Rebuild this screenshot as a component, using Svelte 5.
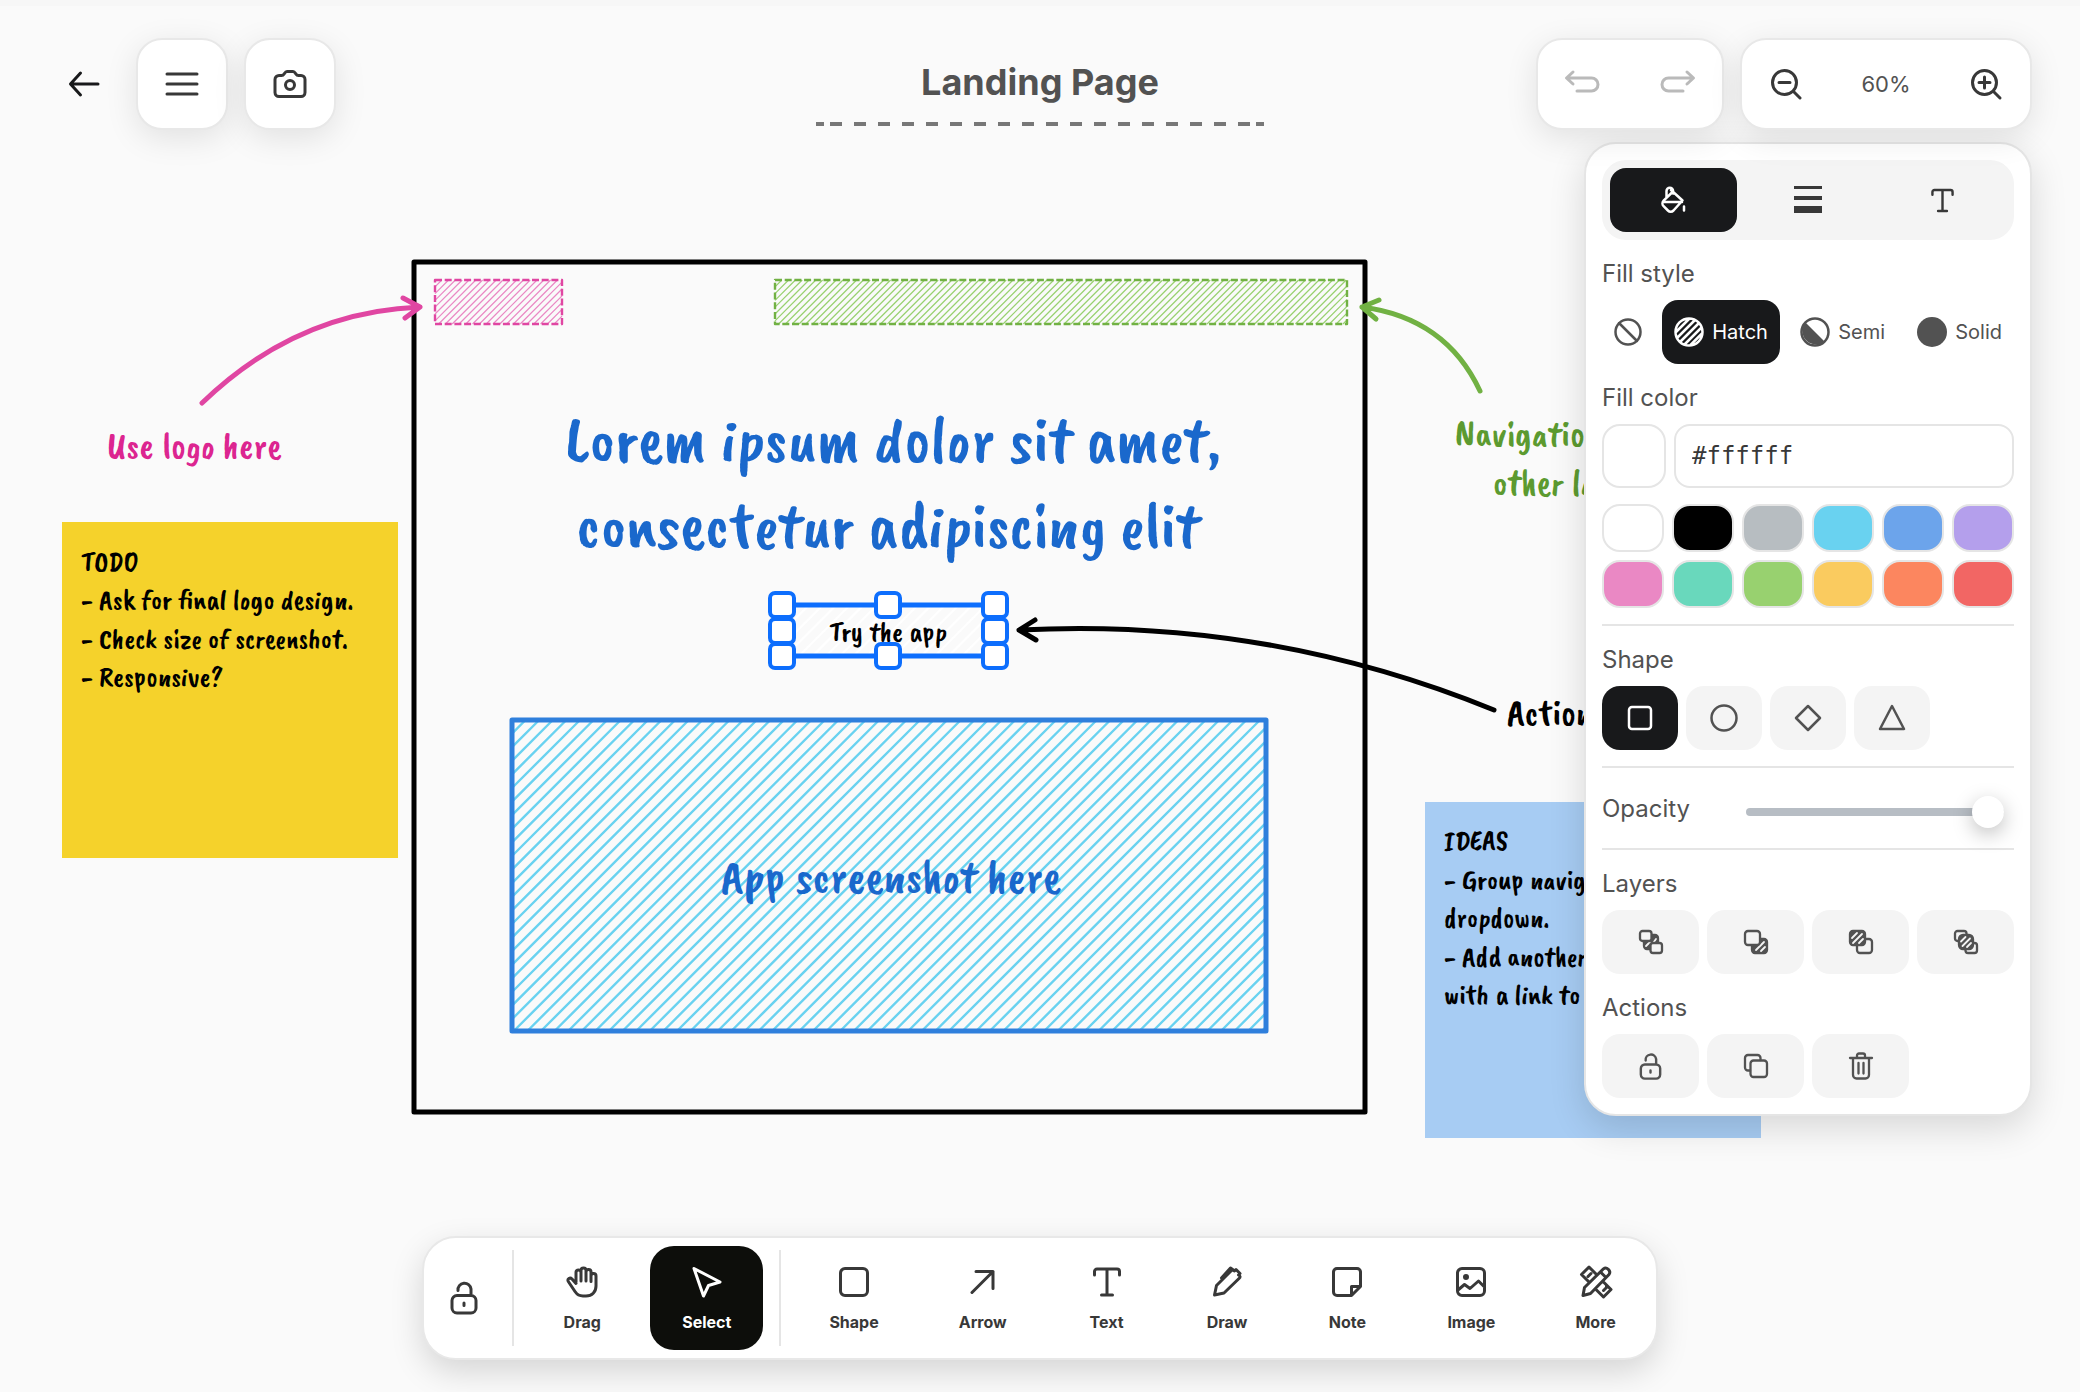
<script>
  let title = $state('Landing Page');
  let fill = $state('#ffffff');
  let opacity = $state(100);
  let tool = $state('Select');
  let fillStyle = $state('Hatch');
  let shape = $state('square');

  const colors = [
    '#ffffff', '#000000', '#b7bdc1', '#69d2f0', '#6ca4eb', '#b49fec',
    '#ea88c4', '#69d8bc', '#98d16f', '#facb5f', '#fc865f', '#f26664'
  ];
  const modes = [
    { name: 'Drag', icon: 'hand' },
    { name: 'Select', icon: 'cursor' }
  ];
  const tools = [
    { name: 'Shape', icon: 'square' },
    { name: 'Arrow', icon: 'arrow' },
    { name: 'Text', icon: 'text' },
    { name: 'Draw', icon: 'draw' },
    { name: 'Note', icon: 'note' },
    { name: 'Image', icon: 'image' },
    { name: 'More', icon: 'more' }
  ];
  const handles = [
    [782, 605], [888, 605], [995, 605],
    [782, 631], [995, 631],
    [782, 656], [888, 656], [995, 656]
  ];
  const icons = {
    back: 'M14.5 7L4.500 18l10 11M5 18h27',
    menu: 'M3 8h30M3 18h30M3 28h30',
    camera:
      'M7 9.500h2.500c1.200 0 2-.5 2.600-1.500l.4-.6c.6-1 1.400-1.900 2.500-1.900h6c1.100 0 1.900.9 2.500 1.900l.4.6c.6 1 1.400 1.500 2.600 1.500H29a4 4 0 0 1 4 4V26.500a4 4 0 0 1-4 4H7a4 4 0 0 1-4-4V13.500a4 4 0 0 1 4-4zM22.500 19a4.500 4.500 0 1 1-9 0a4.500 4.500 0 0 1 9 0z',
    undo: 'M9 6L2.500 12L9 18M3 12h24.500a6.500 6.500 0 0 1 0 13H13',
    redo: 'M27 6l6.500 6L27 18M33 12H8.500a6.500 6.500 0 0 0 0 13H23',
    zoomOut: 'M28.500 16.500a12 12 0 1 1-24 0a12 12 0 0 1 24 0zM25.500 25.500L32 32M11 16.500h11',
    zoomIn: 'M28.500 16.500a12 12 0 1 1-24 0a12 12 0 0 1 24 0zM25.500 25.500L32 32M11 16.500h11M16.500 11v11',
    hand:
      'M12 18V8.500a2.500 2.500 0 0 1 5 0V17M17 16V6.500a2.500 2.500 0 0 1 5 0V17M22 8a2.500 2.500 0 0 1 5 0v9.500M27 12a2.500 2.500 0 0 1 5 0v10c0 6-4 10-10 10h-3c-3.500 0-6-1.500-8-4.500L4.300 17.500c-1.300-2.500 1.700-4.500 3.700-2.500l4 4.500',
    cursor: 'M5 4.500L31 18l-11.500 3.500L14.500 32z',
    square: 'M9 4.500h18a4.500 4.500 0 0 1 4.500 4.500v18a4.500 4.500 0 0 1-4.500 4.500H9A4.500 4.500 0 0 1 4.500 27V9A4.500 4.500 0 0 1 9 4.500z',
    arrow: 'M7 28.500L28 7.500M11 7.500h17v17',
    text: 'M5.500 11V7.500A2.500 2.500 0 0 1 8 5h20a2.500 2.500 0 0 1 2.500 2.500V11M18 5v26M12.500 31h11',
    draw: 'M5.500 31l2-9.500L22 7l1.500-1.500 2 1.500 1.500-1.500 4 4-1.500 1.500c2 1 2 2 .5 3.500L15 29zM12.500 14L21.500 4l3.500 2.500',
    note: 'M8 4.500h20A3.500 3.500 0 0 1 31.500 8v14.500l-9 9H8A3.500 3.500 0 0 1 4.500 28V8A3.500 3.500 0 0 1 8 4.500zM22.500 31v-8.500H31',
    image:
      'M9 4.500h18a4.500 4.500 0 0 1 4.500 4.500v18a4.500 4.500 0 0 1-4.500 4.500H9A4.500 4.500 0 0 1 4.500 27V9A4.500 4.500 0 0 1 9 4.500zM5 26l6.500-5.500 5.500 4 8.500-7.500 6 6M14.500 13a1.500 1.500 0 1 1-3 0a1.500 1.500 0 0 1 3 0z',
    more:
      'M10.500 17.500l-7-7 7.500-7.500 7 7M10 12.500l3-3M26 18.500l7 7-7.500 7.500-7-7M25.500 26.500l3-3v-2M5 31.500l1.500-8L25.500 4.800c3-2.500 8 2 5.500 5.700L12.500 29.500zM22.500 8l5.500 5.500',
    lock: 'M11 15.500h14a5 5 0 0 1 5 5v7.500a5 5 0 0 1-5 5H11a5 5 0 0 1-5-5v-7.500a5 5 0 0 1 5-5zM12 10.500a6.500 6.500 0 0 1 13-1.500v6M18 23v2.500'
  };

  // Diagonal strokes that fill a rectangle, `step` apart along its top edge.
  function hatch(x, y, w, h, step) {
    let d = '';
    for (let c = step; c < w + h; c += step) {
      const x1 = Math.max(0, c - h);
      const x2 = Math.min(w, c);
      d += `M${x + x1} ${y + c - x1}L${x + x2} ${y + c - x2}`;
    }
    return d;
  }
</script>

{#snippet icon(name)}
  <svg class="icon" viewBox="0 0 36 36" aria-hidden="true"><path d={icons[name]} /></svg>
{/snippet}

<div class="app">
  <svg class="canvas" role="img" aria-label="Landing page wireframe">
    <rect class="frame" x="414" y="262" width="951" height="850" />
    <path class="hatch fine pink" d={hatch(435, 280, 127, 44, 6.8)} />
    <rect class="slot" x="435" y="280" width="127" height="44" stroke="#e046a2" />
    <path class="hatch fine green" d={hatch(775, 280, 572, 44, 6.8)} />
    <rect class="slot" x="775" y="280" width="572" height="44" stroke="#71b143" />
    <path class="hatch" d={hatch(512, 720, 754, 311, 13.6)} />
    <rect class="shot" x="512" y="720" width="754" height="311" />

    <path class="link pink" d="M202 403Q296 312 420 307M403 298L420 307L405 318" />
    <path class="link green" d="M1480 391Q1446 318 1362 307M1379 300L1362 307L1376 319" />
    <path class="link" d="M1494 710Q1266 617 1019 630M1035 620L1019 630L1036 640" />

    <text class="label ink-pink" x="107" y="458">Use logo here</text>
    <text class="label ink-green" x="1455" y="446">Navigation</text>
    <text class="label ink-green" x="1493" y="495">other la</text>
    <text class="label" x="1507" y="725">Action</text>

    <text class="headline" x="893" y="461">Lorem ipsum dolor sit amet,</text>
    <text class="headline" x="888" y="547">consectetur adipiscing elit</text>
    <text class="caption" x="891" y="892">App screenshot here</text>

    <rect x="62" y="522" width="336" height="336" fill="#f5d22b" />
    <text class="note">
      <tspan x="81" y="571">TODO</tspan>
      <tspan x="81" y="609">- Ask for final logo design.</tspan>
      <tspan x="81" y="648">- Check size of screenshot.</tspan>
      <tspan x="81" y="686">- Responsive?</tspan>
    </text>

    <rect x="1425" y="802" width="336" height="336" fill="#a7ccf3" />
    <text class="note">
      <tspan x="1444" y="850">IDEAS</tspan>
      <tspan x="1444" y="889">- Group navig</tspan>
      <tspan x="1444" y="927">dropdown.</tspan>
      <tspan x="1444" y="966">- Add another</tspan>
      <tspan x="1444" y="1004">with a link to</tspan>
    </text>

    <path class="hatch white" d={hatch(782, 605, 213, 51, 13.6)} />
    <rect class="selection" x="782" y="605" width="213" height="51" />
    <text class="cta" x="888" y="641">Try the app</text>
    {#each handles as [x, y]}
      <rect class="handle" x={x - 12} y={y - 12} width="24" height="24" rx="5" />
    {/each}
  </svg>

  <header>
    <div class="group start">
      <button class="back" aria-label="Back">{@render icon('back')}</button>
      <button class="card square" aria-label="Menu">{@render icon('menu')}</button>
      <button class="card square" aria-label="Take screenshot">{@render icon('camera')}</button>
    </div>
    <input class="title" aria-label="Board title" bind:value={title} />
    <div class="group end">
      <div class="card history">
        <button aria-label="Undo" disabled>{@render icon('undo')}</button>
        <button aria-label="Redo" disabled>{@render icon('redo')}</button>
      </div>
      <div class="card zoom">
        <button aria-label="Zoom out">{@render icon('zoomOut')}</button>
        <span>60%</span>
        <button aria-label="Zoom in">{@render icon('zoomIn')}</button>
      </div>
    </div>
  </header>

  <main>
    <aside class="panel">
      <div class="tabs">
        <button class="on" aria-label="Fill">
          <svg width="24" height="28" viewBox="0 0 24 28">
            <path d="M10 4L21.500 14.500l-9 10a4 4 0 0 1-5.600 0L2.600 20.200a4 4 0 0 1 0-5.600L11 6.500M5.500 11V5a3.300 3.300 0 0 1 6.600 0v2.500M2 16h19M23 20.500v4" />
          </svg>
        </button>
        <button aria-label="Stroke">
          <svg width="28" height="30" viewBox="0 0 28 30">
            <path class="solid" d="M0 1h28v3H0zM0 11h28v4H0zM0 21h28v7H0z" />
          </svg>
        </button>
        <button class="type" aria-label="Text">{@render icon('text')}</button>
      </div>

      <h2>Fill style</h2>
      <div class="styles">
        <button aria-label="None" onclick={() => (fillStyle = 'None')}>
          <svg width="28" height="28" viewBox="0 0 28 28"><path d="M26.500 14a12.500 12.500 0 1 1-25 0a12.500 12.500 0 0 1 25 0zM5 5l18 18" /></svg>
        </button>
        <button class:on={fillStyle === 'Hatch'} onclick={() => (fillStyle = 'Hatch')}>
          <svg width="30" height="30" viewBox="0 0 30 30"><path d="M28.500 15a13.500 13.500 0 1 1-27 0a13.500 13.500 0 0 1 27 0zM2 15L15 2M3.500 20.500L20.500 3.500M6.500 24.500L24.500 6.500M10.500 27.500L27.500 10.500M16.500 28L28 16.500" /></svg>
          Hatch
        </button>
        <button class:on={fillStyle === 'Semi'} onclick={() => (fillStyle = 'Semi')}>
          <svg width="30" height="30" viewBox="0 0 30 30"><path d="M28.500 15a13.500 13.500 0 1 1-27 0a13.500 13.500 0 0 1 27 0z" /><path class="solid" d="M5.500 5.500a13.500 13.500 0 0 0 19 19z" /></svg>
          Semi
        </button>
        <button class:on={fillStyle === 'Solid'} onclick={() => (fillStyle = 'Solid')}>
          <svg width="30" height="30" viewBox="0 0 30 30"><circle class="solid" cx="15" cy="15" r="15" /></svg>
          Solid
        </button>
      </div>

      <h2>Fill color</h2>
      <div class="hex">
        <button class="swatch" aria-label="Current fill color" style:background-color={fill}></button>
        <input aria-label="Fill color value" bind:value={fill} />
      </div>
      <div class="palette">
        {#each colors as c}
          <button class="swatch" aria-label={`Color ${c}`} style:background-color={c} onclick={() => (fill = c)}></button>
        {/each}
      </div>
      <hr />

      <h2>Shape</h2>
      <div class="shapes">
        <button class:on={shape === 'square'} aria-label="Square" onclick={() => (shape = 'square')}>
          <svg width="28" height="28" viewBox="0 0 28 28"><rect x="3" y="3" width="22" height="22" rx="3" /></svg>
        </button>
        <button class:on={shape === 'circle'} aria-label="Circle" onclick={() => (shape = 'circle')}>
          <svg width="28" height="28" viewBox="0 0 28 28"><circle cx="14" cy="14" r="12.500" /></svg>
        </button>
        <button class:on={shape === 'diamond'} aria-label="Diamond" onclick={() => (shape = 'diamond')}>
          <svg width="28" height="28" viewBox="0 0 28 28"><path d="M14 2l12 12-12 12L2 14z" /></svg>
        </button>
        <button class:on={shape === 'triangle'} aria-label="Triangle" onclick={() => (shape = 'triangle')}>
          <svg width="28" height="28" viewBox="0 0 28 28"><path d="M14 2l12 23H2z" /></svg>
        </button>
      </div>
      <hr />

      <div class="opacity">
        <label for="opacity">Opacity</label>
        <input id="opacity" type="range" min="0" max="100" bind:value={opacity} />
      </div>
      <hr />

      <h2>Layers</h2>
      <div class="grid">
        <button aria-label="Send to back">
          <svg width="24" height="24" viewBox="0 0 24 24">
            <rect class="solid" x="5" y="5" width="14" height="14" rx="3" /><path class="glint" d="M7 16l4-4M12 16l5-7" />
            <rect class="cover" x="1" y="1" width="11.500" height="10" rx="2.500" /><rect class="cover" x="11.500" y="13" width="11.500" height="10" rx="2.500" />
          </svg>
        </button>
        <button aria-label="Send backward">
          <svg width="24" height="24" viewBox="0 0 24 24">
            <rect class="solid" x="8" y="9" width="15" height="14" rx="3" /><path class="glint" d="M12 20l8-8M17 21l4-4" />
            <rect class="cover" x="1" y="1" width="15" height="14" rx="3" />
          </svg>
        </button>
        <button aria-label="Bring forward">
          <svg width="24" height="24" viewBox="0 0 24 24">
            <rect class="cover" x="8" y="9" width="15" height="14" rx="3" />
            <rect class="solid" x="1" y="1" width="15" height="14" rx="3" /><path class="glint" d="M3 8l5-5M4 13l9-9M10 13l4-4" />
          </svg>
        </button>
        <button aria-label="Bring to front">
          <svg width="24" height="24" viewBox="0 0 24 24">
            <rect class="cover" x="1" y="1" width="11.500" height="10" rx="2.500" /><rect class="cover" x="11.500" y="13" width="11.500" height="10" rx="2.500" />
            <rect class="solid" x="5" y="5" width="14" height="14" rx="4" /><path class="glint" d="M7 11.500l4.500-4.500M8.500 16l7.500-7.500M13 17l4-4" />
          </svg>
        </button>
      </div>

      <h2>Actions</h2>
      <div class="grid">
        <button class="lock" aria-label="Lock">{@render icon('lock')}</button>
        <button aria-label="Duplicate">
          <svg width="24" height="24" viewBox="0 0 24 24">
            <rect x="6.500" y="6.500" width="16.500" height="16.500" rx="3" /><path d="M6 16.500H4A3 3 0 0 1 1 13.500V4a3 3 0 0 1 3-3h9.500a3 3 0 0 1 3 3v2" />
          </svg>
        </button>
        <button aria-label="Delete">
          <svg width="24" height="28" viewBox="0 0 24 28">
            <path d="M1 6h22M8 6V3.500A2 2 0 0 1 10 1.500h4a2 2 0 0 1 2 2V6M4 6v17a3.500 3.500 0 0 0 3.500 3.500h9A3.500 3.500 0 0 0 20 23V6M9.500 11v10.500M14.500 11v10.500" />
          </svg>
        </button>
      </div>
    </aside>
  </main>

  <footer>
    <nav class="toolbar" aria-label="Tools">
      <button class="keep" aria-label="Keep tool active">{@render icon('lock')}</button>
      <span class="rule"></span>
      {#each modes as t}
        <button class="tool" class:on={tool === t.name} onclick={() => (tool = t.name)}>{@render icon(t.icon)}{t.name}</button>
      {/each}
      <span class="rule"></span>
      {#each tools as t}
        <button class="tool" class:on={tool === t.name} onclick={() => (tool = t.name)}>{@render icon(t.icon)}{t.name}</button>
      {/each}
    </nav>
  </footer>
</div>

<style>
  :global(body) {
    background: #fafafa;
  }
  .app {
    position: relative;
    display: flex;
    flex-direction: column;
    min-height: 100vh;
    box-sizing: border-box;
    overflow: hidden;
    border-top: 6px solid #f7f7f7;
    font-family: Inter, 'Liberation Sans', sans-serif;
    color: #525252;
  }
  .app * {
    box-sizing: border-box;
  }
  button,
  input {
    margin: 0;
    padding: 0;
    border: 0;
    background: none;
    color: inherit;
    font: inherit;
    outline: none;
  }
  button {
    display: flex;
    align-items: center;
    justify-content: center;
    cursor: pointer;
  }
  svg {
    display: block;
    flex: none;
    overflow: visible;
    fill: none;
    stroke: currentColor;
    stroke-width: 2.5;
    stroke-linecap: round;
    stroke-linejoin: round;
  }
  .icon {
    width: 36px;
    height: 36px;
    stroke-width: 3;
  }
  .solid {
    fill: currentColor;
    stroke: none;
  }

  /* free canvas */
  .canvas {
    position: absolute;
    inset: -6px 0 0;
    width: 100%;
    height: 100%;
    stroke: none;
    font-family: 'Caveat Brush', Lato, cursive;
  }
  .frame {
    stroke: #000;
    stroke-width: 5;
  }
  .slot {
    stroke-width: 2.4;
    stroke-dasharray: 7 2.7;
    stroke-linecap: butt;
  }
  .hatch {
    stroke: #69d2f0;
    stroke-width: 2.4;
    stroke-linecap: butt;
  }
  .hatch.fine {
    stroke-width: 1.2;
  }
  .hatch.pink {
    stroke: #ea88c4;
  }
  .hatch.green {
    stroke: #98d16f;
  }
  .hatch.white {
    stroke: #fff;
  }
  .shot {
    stroke: #2f7fdc;
    stroke-width: 5;
  }
  .link {
    stroke: #000;
    stroke-width: 5;
  }
  .link.pink {
    stroke: #e046a2;
  }
  .link.green {
    stroke: #71b143;
  }
  text {
    fill: #000;
  }
  .label {
    font-size: 38px;
  }
  .ink-pink {
    fill: #dc2590;
  }
  .ink-green {
    fill: #5c9a30;
  }
  .headline,
  .caption {
    fill: #1a68cc;
    text-anchor: middle;
  }
  .headline {
    font-size: 67px;
  }
  .caption {
    font-size: 48px;
  }
  .note {
    font-size: 29px;
  }
  .cta {
    font-size: 29px;
    text-anchor: middle;
  }
  .selection,
  .handle {
    stroke: #0d6efd;
    stroke-width: 4;
  }
  .selection {
    stroke-width: 5;
  }
  .handle {
    fill: #fff;
  }

  /* header */
  header {
    position: relative;
    z-index: 1;
    display: grid;
    grid-template-columns: 1fr auto 1fr;
    align-items: start;
    padding: 32px 48px 0;
    color: #383838;
  }
  .group {
    display: flex;
    gap: 16px;
  }
  .end {
    justify-content: flex-end;
  }
  .card {
    display: flex;
    height: 92px;
    border: 2px solid #e8e8e8;
    border-radius: 26px;
    background: #fff;
    box-shadow: 0 8px 32px rgba(0, 0, 0, 0.1);
  }
  .square {
    width: 92px;
  }
  .back {
    width: 72px;
    color: #18191b;
  }
  .title {
    width: 448px;
    height: 88px;
    padding: 4px 0;
    text-align: center;
    font-size: 36px;
    font-weight: 700;
    color: #525252;
    background:
      linear-gradient(#777, #777) left bottom / 8px 4px no-repeat,
      linear-gradient(#777, #777) right bottom / 8px 4px no-repeat,
      repeating-linear-gradient(90deg, #777 0 12px, transparent 12px 24px) 14px 100% / 420px 4px no-repeat;
  }
  .history {
    gap: 8px;
    color: #bababa;
  }
  .history button,
  .zoom button {
    width: 88px;
  }
  .zoom {
    width: 292px;
    align-items: stretch;
  }
  .zoom span {
    flex: 1;
    align-self: center;
    text-align: center;
    font-size: 22px;
    color: #525252;
  }

  /* properties panel */
  main {
    position: relative;
    display: flex;
    flex: 1;
    justify-content: flex-end;
    align-items: flex-start;
    padding: 12px 48px 32px;
    pointer-events: none;
  }
  .panel {
    width: 448px;
    padding: 16px;
    border: 2px solid #e5e5e5;
    border-radius: 32px;
    background: #fff;
    box-shadow: 0 12px 36px rgba(0, 0, 0, 0.14);
    pointer-events: auto;
  }
  .tabs {
    display: grid;
    grid-template-columns: repeat(3, 1fr);
    gap: 8px;
    padding: 8px;
    border-radius: 24px;
    background: #f4f4f4;
    color: #383838;
  }
  .tabs button {
    height: 64px;
    border-radius: 16px;
  }
  .type .icon,
  .lock .icon {
    width: 29px;
    height: 29px;
  }
  .panel .on {
    background: #18191b;
    color: #fff;
  }
  h2 {
    margin: 20px 0 12px;
    font-size: 24px;
    font-weight: 400;
    line-height: 28px;
  }
  .styles {
    display: flex;
    justify-content: space-between;
  }
  .styles button {
    gap: 8px;
    height: 64px;
    padding: 0 12px;
    border-radius: 16px;
    font-size: 20px;
  }
  .hex {
    display: flex;
    gap: 8px;
    margin-bottom: 16px;
  }
  .swatch {
    height: 48px;
    border: 2px solid #e5e5e5;
    border-radius: 18px;
  }
  .hex .swatch {
    width: 64px;
    height: 64px;
  }
  .hex input {
    flex: 1;
    min-width: 0;
    height: 64px;
    padding: 0 16px;
    border: 2px solid #e5e5e5;
    border-radius: 16px;
    font-family: 'DejaVu Sans Mono', monospace;
    font-size: 24px;
    color: #383838;
  }
  .palette {
    display: grid;
    grid-template-columns: repeat(6, 1fr);
    gap: 8px;
  }
  hr {
    height: 2px;
    margin: 16px 0 0;
    border: 0;
    background: #e5e5e5;
  }
  .shapes {
    display: flex;
    gap: 8px;
  }
  .shapes button,
  .grid button {
    height: 64px;
    border-radius: 18px;
    background: #f4f4f4;
  }
  .shapes button {
    width: 76px;
  }
  .grid {
    display: grid;
    grid-template-columns: repeat(4, 1fr);
    gap: 8px;
  }
  .grid svg {
    stroke-width: 2.3;
  }
  .grid .lock .icon {
    stroke-width: 3;
  }
  .grid .solid {
    stroke: currentColor;
    stroke-width: 2.3;
  }
  .cover {
    fill: #f4f4f4;
  }
  .glint {
    stroke: #f4f4f4;
    stroke-width: 1.8;
  }
  .opacity {
    display: grid;
    grid-template-columns: 144px 1fr;
    align-items: center;
    height: 80px;
    padding-right: 10px;
    font-size: 24px;
  }
  .opacity + hr {
    margin-top: 0;
  }
  input[type='range'] {
    width: 100%;
    height: 32px;
    margin-top: 8px;
    appearance: none;
  }
  input[type='range']::-webkit-slider-runnable-track {
    height: 8px;
    border-radius: 4px;
    background: #b7bdc4;
  }
  input[type='range']::-webkit-slider-thumb {
    width: 32px;
    height: 32px;
    margin-top: -12px;
    border-radius: 50%;
    background: #fff;
    box-shadow: 0 6px 20px rgba(0, 0, 0, 0.25);
    appearance: none;
  }

  /* toolbar */
  footer {
    position: relative;
    display: flex;
    justify-content: center;
    padding-bottom: 32px;
  }
  .toolbar {
    display: flex;
    align-items: center;
    gap: 16px;
    height: 124px;
    padding: 0 8px;
    border: 2px solid #e8e8e8;
    border-radius: 34px;
    background: #fff;
    box-shadow: 0 12px 32px rgba(0, 0, 0, 0.15);
    color: #383838;
  }
  .keep {
    width: 64px;
    height: 104px;
  }
  .rule {
    width: 2px;
    height: 96px;
    background: #e5e5e5;
  }
  .tool {
    flex-direction: column;
    gap: 12px;
    min-width: 104px;
    height: 104px;
    padding: 0 32px;
    border-radius: 24px;
    font-size: 16px;
    font-weight: 700;
    line-height: 20px;
  }
  .tool.on {
    background: #0d0e0b;
    color: #fff;
  }
</style>
